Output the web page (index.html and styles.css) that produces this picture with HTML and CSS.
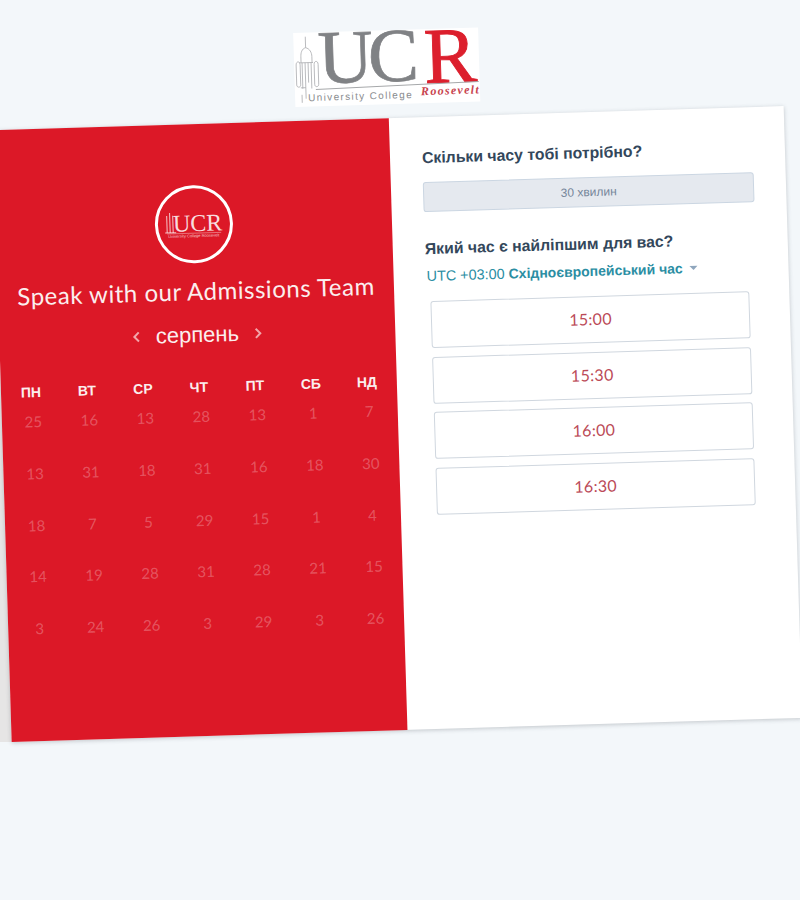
FILE: index.html
```html
<!DOCTYPE html>
<html lang="uk">
<head>
<meta charset="utf-8">
<title>Speak with our Admissions Team</title>
<link rel="stylesheet" href="styles.css">
</head>
<body>
<div class="edge-strip"></div>
<main class="stage">
  <header class="brand">
    <svg class="brand-logo" viewBox="0 0 185 74" width="185" height="74">
      <rect width="185" height="74" fill="#fff"/>
      <g fill="none" stroke="#a9abae" stroke-width=".8">
        <path d="M12 4V15M12 15C8 16 7 20 7 24V30M12 15C16 16 18 20 18 24V30M5 30H19M8 30V56M17 30V56"/>
        <path d="M2 32C2 28 6 28 6 32V52C6 55 2 55 2 52ZM20 32C20 28 24 28 24 32V52C24 55 20 55 20 52Z"/>
        <path d="M11 30V66M14 30V50M6 55H11M7 70V62"/>
      </g>
      <text class="logo-big" y="51 51" x="24 74"><tspan class="logo-uc">UC</tspan></text>
      <text class="logo-big" y="54" x="130"><tspan class="logo-r">R</tspan></text>
      <path d="M21 57L184 54" stroke="#a6a8aa" stroke-width="1"/>
      <text class="logo-sub" x="13" y="68.5">University College</text>
      <text class="logo-sub2" x="126" y="66">Roosevelt</text>
    </svg>
  </header>
  <section class="card">
    <div class="panel-left">
      <div class="badge">
        <svg viewBox="0 0 72 72" width="72" height="72">
          <path d="M9 27V44M12 24V44M15 27V44M7 44H18" stroke="#f5c5c8" stroke-width="1" fill="none"/>
          <text class="badge-ucr" x="15" y="43">UCR</text>
          <path d="M9 45H63" stroke="#f5c5c8" stroke-width=".5"/>
          <text class="badge-sub" x="10" y="49">University College Roosevelt</text>
        </svg>
      </div>
      <h1 class="title">Speak with our Admissions Team</h1>
      <div class="month-row">
        <svg class="chev" viewBox="0 0 8 12" width="8" height="12"><path d="M6.5 1.5L2 6l4.5 4.5" /></svg>
        <span class="month">серпень</span>
        <svg class="chev" viewBox="0 0 8 12" width="8" height="12"><path d="M1.5 1.5L6 6l-4.5 4.5" /></svg>
      </div>
      <div class="cal-head">
        <span>ПН</span><span>ВТ</span><span>СР</span><span>ЧТ</span><span>ПТ</span><span>СБ</span><span>НД</span>
      </div>
      <div class="cal-grid">
        <span>25</span><span>16</span><span>13</span><span>28</span><span>13</span><span>1</span><span>7</span>
        <span>13</span><span>31</span><span>18</span><span>31</span><span>16</span><span>18</span><span>30</span>
        <span>18</span><span>7</span><span>5</span><span>29</span><span>15</span><span>1</span><span>4</span>
        <span>14</span><span>19</span><span>28</span><span>31</span><span>28</span><span>21</span><span>15</span>
        <span>3</span><span>24</span><span>26</span><span>3</span><span>29</span><span>3</span><span>26</span>
      </div>
    </div>
    <div class="panel-right">
      <h2 class="question">Скільки часу тобі потрібно?</h2>
      <div class="duration">30 хвилин</div>
      <h2 class="question question-time">Який час є найліпшим для вас?</h2>
      <div class="timezone">
        <span class="tz-offset">UTC +03:00</span>
        <strong class="tz-name">Східноєвропейський час</strong>
        <span class="caret"></span>
      </div>
      <div class="slots">
        <button class="slot">15:00</button>
        <button class="slot">15:30</button>
        <button class="slot">16:00</button>
        <button class="slot">16:30</button>
      </div>
    </div>
  </section>
</main>
</body>
</html>
```
FILE: styles.css
```css
* { box-sizing: border-box; }
html, body { margin: 0; height: 100%; }
body {
  width: 800px;
  height: 900px;
  overflow: hidden;
  position: relative;
  background: #f3f7fa;
  font-family: "Liberation Sans", Arial, sans-serif;
}
.edge-strip {
  position: absolute;
  left: 0;
  top: 300px;
  width: 14px;
  height: 442px;
  background: #e6e5e5;
}
.stage {
  position: relative;
  width: 791px;
  margin-left: -11px;
  padding-top: 42px;
  display: flex;
  flex-direction: column;
  align-items: center;
  transform-origin: 11px 0;
  transform: rotate(-1.75deg);
}
.brand { height: 74px; margin-bottom: 14px; }
.brand-logo { display: block; overflow: visible; }
.logo-big { font-family: "Liberation Serif", serif; font-size: 79px; }
.logo-uc { font-size: 76px; fill: #808285; stroke: #808285; stroke-width: .7px; }
.logo-r { fill: #dc1f2d; stroke: #dc1f2d; stroke-width: .9px; }
.logo-sub { font-family: "Liberation Sans", sans-serif; font-size: 10px; letter-spacing: 1.35px; fill: #8a8c8f; }
.logo-sub2 { font-family: "Liberation Serif", serif; font-size: 12px; font-style: italic; font-weight: 700; letter-spacing: 1.3px; fill: #c8454f; }

.card {
  width: 791px;
  height: 612px;
  display: flex;
  background: #fff;
  box-shadow: 0 1px 4px rgba(60, 70, 80, .28);
}
.panel-left {
  width: 396px;
  flex: none;
  background: #dc1827;
  color: #fff;
  padding: 61px 2px 0;
  display: flex;
  flex-direction: column;
  align-items: center;
}
.badge {
  width: 78px;
  height: 78px;
  border: 3px solid #fff;
  border-radius: 50%;
  display: flex;
  align-items: center;
  justify-content: center;
  flex: none;
}
.badge svg { display: block; }
.badge-ucr { font-family: "Liberation Serif", serif; font-size: 24px; fill: #f8dcde; }
.badge-sub { font-family: "Liberation Sans", sans-serif; font-size: 4px; fill: #f5c5c8; }
.title {
  margin: 11px 0 0;
  font-family: Lato, sans-serif;
  font-weight: 400;
  font-size: 24px;
  letter-spacing: .52px;
  line-height: 34px;
  color: #fbeeee;
  white-space: nowrap;
}
.month-row {
  margin-top: 12px;
  height: 30px;
  display: flex;
  align-items: center;
  justify-content: center;
  gap: 15px;
}
.month { font-size: 22px; color: #fbeeee; }
.chev { fill: none; stroke: #f2a5aa; stroke-width: 2; }
.cal-head, .cal-grid {
  width: 392px;
  display: grid;
  grid-template-columns: repeat(7, 56px);
  justify-items: center;
}
.cal-head {
  margin-top: 29px;
  font-size: 14px;
  font-weight: 700;
  line-height: 16px;
  color: #fbeeee;
}
.cal-grid {
  margin-top: 9px;
  margin-left: 3px;
  grid-auto-rows: 51.8px;
  font-family: Lato, sans-serif;
  font-size: 15px;
  line-height: 24px;
  color: rgba(255, 255, 255, .27);
}

.panel-right {
  flex: 1;
  padding: 31px 32px 0;
  display: flex;
  flex-direction: column;
}
.question {
  margin: 0;
  font-size: 15.8px;
  line-height: 20px;
  font-weight: 700;
  color: #33475b;
}
.duration {
  margin-top: 14px;
  height: 30px;
  border: 1px solid #cbd6e2;
  border-radius: 3px;
  background: #e5e9ef;
  color: #75869a;
  font-size: 12px;
  display: flex;
  align-items: center;
  justify-content: center;
}
.question-time { margin-top: 27px; }
.timezone {
  margin-top: 7px;
  display: flex;
  align-items: center;
  gap: 4px;
  height: 20px;
  padding-left: 1px;
  color: #2b8ea3;
  font-size: 14.4px;
}
.tz-name { font-size: 14px; }
.caret {
  margin-left: 3px;
  width: 0;
  height: 0;
  border-left: 4px solid transparent;
  border-right: 4px solid transparent;
  border-top: 4px solid #8fa6bd;
}
.slots {
  margin: 15px 8px 0 4px;
  display: flex;
  flex-direction: column;
  gap: 8.7px;
}
.slot {
  height: 47px;
  border: 1px solid #d0d7df;
  border-radius: 3px;
  background: #fff;
  color: #bb4a57;
  font-family: Lato, sans-serif;
  font-size: 16px;
  letter-spacing: .3px;
  padding: 0 0 2px;
}
```
